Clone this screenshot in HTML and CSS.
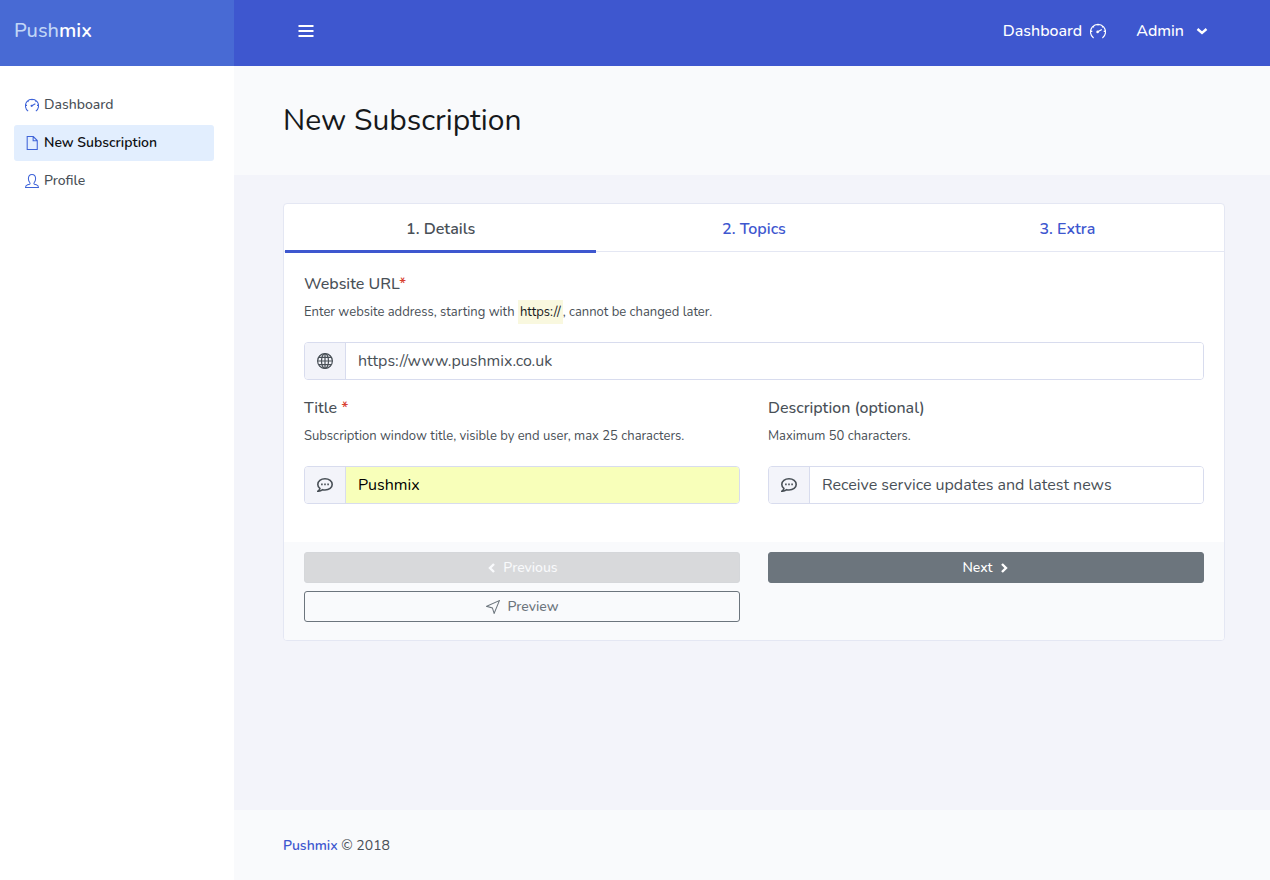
FILE: index.html
```html
<!DOCTYPE html>
<html lang="en">
<head>
<meta charset="utf-8">
<meta name="viewport" content="width=device-width, initial-scale=1">
<title>New Subscription - Pushmix</title>
<link rel="stylesheet" href="styles.css">
</head>
<body>
<svg class="sprite" aria-hidden="true">
  <symbol id="gauge" viewBox="0 0 16 16">
    <path d="M3.600 15A7.500 7.500 0 1 1 12.400 15M8 .8v1.800M.8 8.400h1.500M13.700 8.400h1.500M3 3.400l1 1M13 3.400l-1 1M7.800 8.800l4-2.300"/>
    <circle cx="7.600" cy="8.900" r=".7"/>
  </symbol>
  <symbol id="file" viewBox="0 0 16 16"><path d="M2.500.6h7l4.500 4.600v10.200H2.500zM9.300.8v4.700H14"/></symbol>
  <symbol id="person" viewBox="0 0 16 16"><path d="M.6 15.400h14.800c0-1.900-.7-2.500-2.400-3l-2.200-.7c-.7-.3-.8-1.300-.2-2 .9-1 1.500-2.400 1.500-4.200C12.100 2.400 10.600.6 8 .6S3.900 2.400 3.900 5.500c0 1.800.6 3.200 1.500 4.200.6.7.5 1.700-.2 2l-2.200.7c-1.700.5-2.400 1.100-2.400 3z"/></symbol>
  <symbol id="globe" viewBox="0 0 16 16"><circle cx="8" cy="8" r="7.400"/><ellipse cx="8" cy="8" rx="3.500" ry="7.400"/><path d="M8 .6v14.800M.6 8h14.800M1.700 4.400h12.600M1.700 11.600h12.600"/></symbol>
  <symbol id="bubble" viewBox="0 0 16 16"><path d="M2.900 11.300C1.400 10.300.8 8.900.8 7.400c0-3.100 3.100-5.600 7.200-5.600s7.200 2.500 7.200 5.600-3.100 5.600-7.200 5.600c-.8 0-1.600-.1-2.300-.3-1.200.9-2.800 1.700-4.700 1.500 1-.6 1.700-1.600 1.900-2.900z"/><path class="dots" d="M4.100 6.600h1.600v1.600H4.100zM7.200 6.600h1.600v1.600H7.200zM10.300 6.600h1.600v1.600h-1.600z"/></symbol>
  <symbol id="plane" viewBox="0 0 16 16"><path d="M15.300.7 9.300 15.300 7.300 9 .7 7.200z"/></symbol>
  <symbol id="down" viewBox="0 0 12 12"><path d="m1.500 4 4.500 4 4.500-4"/></symbol>
  <symbol id="left" viewBox="0 0 12 12"><path d="M8 2 4 6l4 4"/></symbol>
  <symbol id="right" viewBox="0 0 12 12"><path d="m4 2 4 4-4 4"/></symbol>
  <symbol id="bars" viewBox="0 0 16 16"><path d="M.500 3h15M.500 8h15M.500 13h15"/></symbol>
</svg>
<div class="page">
  <header class="topbar">
    <a class="brand" href="#"><span class="brand-soft">Push</span>mix</a>
    <div class="topbar-main">
      <button class="menu-toggle" type="button" aria-label="Toggle menu"><svg class="icon bars"><use href="#bars"/></svg></button>
      <nav class="topnav" aria-label="Account">
        <a href="#">Dashboard <svg class="icon icon-lg"><use href="#gauge"/></svg></a>
        <button class="admin" type="button">Admin <svg class="icon bold"><use href="#down"/></svg></button>
      </nav>
    </div>
  </header>
  <div class="layout">
    <nav class="sidebar" aria-label="Main">
      <a href="#"><svg class="icon"><use href="#gauge"/></svg>Dashboard</a>
      <a class="current" href="#" aria-current="page"><svg class="icon"><use href="#file"/></svg>New Subscription</a>
      <a href="#"><svg class="icon"><use href="#person"/></svg>Profile</a>
    </nav>
    <div class="content">
      <div class="hero"><h1>New Subscription</h1></div>
      <main class="main">
        <form class="card">
          <nav class="tabs" aria-label="Steps">
            <a class="active" href="#">1. Details</a>
            <a href="#">2. Topics</a>
            <a href="#">3. Extra</a>
          </nav>
          <div class="card-body">
            <div class="field wide">
              <label for="url">Website URL<span class="required">*</span></label>
              <p>Enter website address, starting with <mark>https://</mark>, cannot be changed later.</p>
              <div class="input-group">
                <span class="addon"><svg class="icon icon-lg"><use href="#globe"/></svg></span>
                <input id="url" type="text" value="https://www.pushmix.co.uk">
              </div>
            </div>
            <div class="field">
              <label for="title">Title <span class="required">*</span></label>
              <p>Subscription window title, visible by end user, max 25 characters.</p>
              <div class="input-group">
                <span class="addon"><svg class="icon icon-lg bubble"><use href="#bubble"/></svg></span>
                <input class="filled" id="title" type="text" value="Pushmix">
              </div>
            </div>
            <div class="field">
              <label for="description">Description (optional)</label>
              <p>Maximum 50 characters.</p>
              <div class="input-group">
                <span class="addon"><svg class="icon icon-lg bubble"><use href="#bubble"/></svg></span>
                <input id="description" type="text" value="Receive service updates and latest news">
              </div>
            </div>
          </div>
          <div class="card-footer">
            <button class="btn previous" type="button" disabled><svg class="icon bold"><use href="#left"/></svg>Previous</button>
            <button class="btn next" type="button">Next<svg class="icon bold"><use href="#right"/></svg></button>
            <button class="btn preview" type="button"><svg class="icon"><use href="#plane"/></svg>Preview</button>
          </div>
        </form>
      </main>
      <footer class="footer"><a href="#">Pushmix</a> © 2018</footer>
    </div>
  </div>
</div>
</body>
</html>
```

FILE: styles.css
```css
* { box-sizing: border-box; }
body {
  margin: 0;
  font-family: Nunito, Lato, sans-serif;
  font-size: 16px;
  line-height: 24px;
  color: #495057;
  background: #fff;
}
a { color: #3e57cf; text-decoration: none; }
button, input { font: inherit; }
h1, p { margin: 0; }
.sprite { display: none; }
.icon {
  width: 14px;
  height: 14px;
  flex: none;
  fill: none;
  stroke: currentColor;
  stroke-width: 1.2;
}
.icon-lg { width: 16px; height: 16px; }
.bold { width: 12px; height: 12px; stroke-width: 2.4; }
.bars { width: 16px; height: 16px; stroke-width: 2.2; }
.bubble { stroke-width: 1.6; }
.dots { fill: currentColor; stroke: none; }

.page { min-height: 100vh; display: flex; flex-direction: column; }
.topbar { display: flex; height: 66px; background: #3e57cf; }
.brand {
  width: 234px;
  flex: none;
  padding: 19px 14px;
  background: #486ad4;
  color: #fff;
  font-size: 20px;
  font-weight: 600;
}
.brand-soft { color: #c1d6f6; font-weight: 500; }
.topbar-main {
  flex: 1;
  display: flex;
  align-items: center;
  justify-content: space-between;
  padding: 0 62px 4px 64px;
}
.menu-toggle, .admin {
  display: flex;
  align-items: center;
  gap: 12px;
  padding: 0;
  border: 0;
  background: none;
  color: #fff;
}
.topnav { display: flex; gap: 30px; font-weight: 500; }
.topnav a { display: flex; align-items: center; gap: 8px; color: #fff; }

.layout { flex: 1; display: flex; }
.sidebar {
  width: 234px;
  flex: none;
  display: flex;
  flex-direction: column;
  gap: 2px;
  padding: 21px 20px 20px 14px;
  font-size: 14px;
  font-weight: 500;
}
.sidebar a {
  height: 36px;
  display: flex;
  align-items: center;
  gap: 5px;
  padding: 0 11px;
  border-radius: 3px;
  color: #495057;
}
.sidebar .icon { color: #3e63d8; }
.sidebar .current { background: #e2eefe; color: #0e1013; font-weight: 600; }

.content {
  flex: 1;
  min-width: 0;
  display: flex;
  flex-direction: column;
  background: #f3f4fa;
}
.hero { padding: 36px 49px; background: #f9fafc; }
h1 { font-size: 30px; line-height: 37px; font-weight: 400; color: #16181b; }
.main { flex: 1; padding: 28px 45px 28px 49px; }
.card {
  border: 1px solid #e4e7f3;
  border-radius: 4px;
  background: #fff;
  overflow: hidden;
}
.tabs {
  display: grid;
  grid-template-columns: repeat(3, 1fr);
  height: 48px;
  border-bottom: 1px solid #e4e7f3;
  font-weight: 600;
  text-align: center;
}
.tabs a {
  height: 49px;
  margin: 0 1px;
  padding-top: 13px;
  border-bottom: 3px solid transparent;
}
.tabs .active { color: #495057; border-bottom-color: #3e57cf; }
.card-body {
  display: grid;
  grid-template-columns: 1fr 1fr;
  gap: 16px 28px;
  padding: 20px 20px 38px;
}
.wide { grid-column: 1 / -1; }
.field label { display: block; margin-bottom: 4px; font-weight: 500; }
.field p { margin-bottom: 18px; font-size: 13px; }
.required { color: #d9402f; }
mark { display: inline-block; padding: 0 2px; background: #f9f8df; color: #16181b; }
.input-group {
  display: flex;
  height: 38px;
  border: 1px solid #d8dcee;
  border-radius: 4px;
  overflow: hidden;
}
.addon {
  width: 41px;
  flex: none;
  display: flex;
  align-items: center;
  justify-content: center;
  border-right: 1px solid #d8dcee;
  background: #f3f4fa;
}
.input-group input {
  flex: 1;
  min-width: 0;
  padding: 0 12px;
  border: 0;
  background: #fff;
  color: #495057;
}
.input-group .filled { background: #f8ffba; color: #000; }
.card-footer {
  display: grid;
  grid-template-columns: 1fr 1fr;
  gap: 8px 28px;
  padding: 10px 20px 18px;
  background: #f9fafc;
}
.btn {
  height: 31px;
  display: flex;
  align-items: center;
  justify-content: center;
  gap: 5px;
  padding: 0 8px;
  border: 1px solid #6c757d;
  border-radius: 3px;
  font-size: 14px;
  font-weight: 500;
}
.previous { background: #d8d9db; border-color: #d5d7da; color: #f9fafc; }
.next { background: #6c757d; color: #fff; }
.preview { gap: 8px; background: transparent; color: #6c757d; }
.footer { padding: 24px 49px 22px; background: #f9fafc; font-size: 14px; }
.footer a { font-weight: 600; }
```
